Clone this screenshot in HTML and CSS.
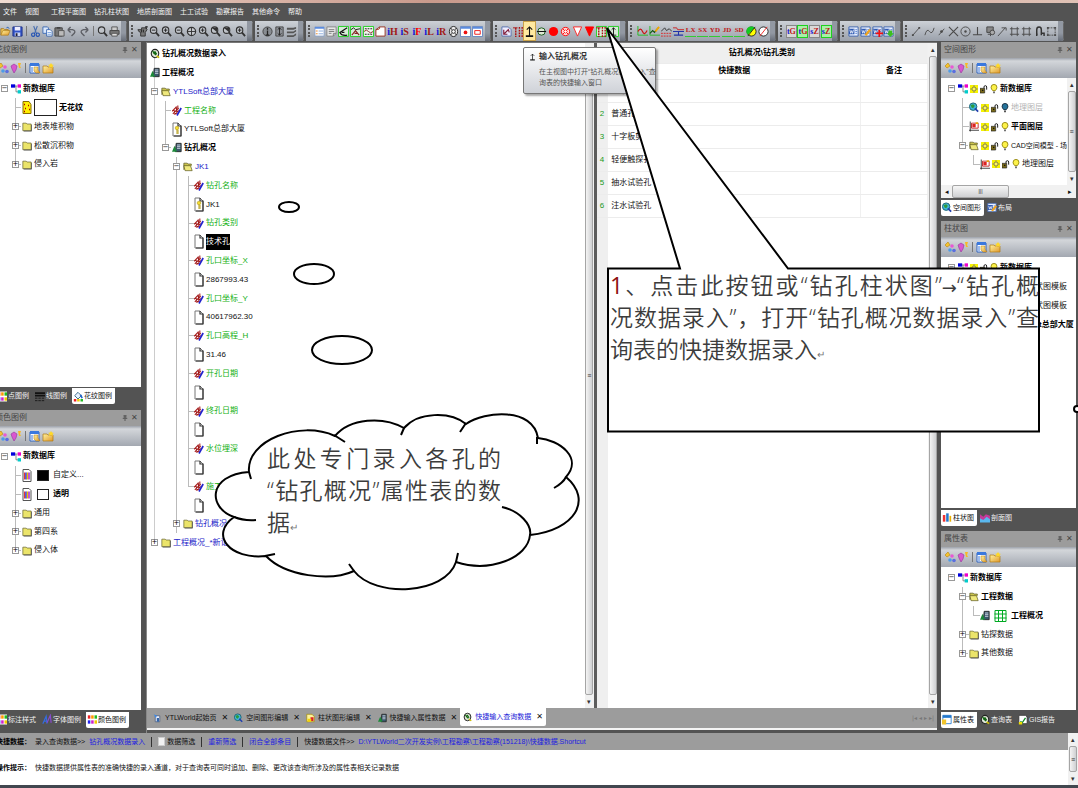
FILE: index.html
```html
<!DOCTYPE html>
<html lang="zh-CN">
<head>
<meta charset="utf-8">
<title>YTLWorld</title>
<link rel="stylesheet" href="styles.css">
</head>
<body>
<svg class="defs" aria-hidden="true">
<defs>
<linearGradient id="gy" x1="0" y1="0" x2="1" y2="1"><stop offset="0" stop-color="#fff3a0"/><stop offset="1" stop-color="#e0982a"/></linearGradient>
</defs>
<symbol id="open" viewBox="0 0 12 12"><path d="M1 10V3h3l1 1h4v2" fill="#f7d56a" stroke="#a87514"/><path d="M1 10l2-5h8l-2 5z" fill="url(#gy)" stroke="#a87514" stroke-width=".7"/><path d="M7 2q2-2 3 1" fill="none" stroke="#2c62b8"/></symbol>
<symbol id="save" viewBox="0 0 12 12"><path d="M1 1h10v10H1z" fill="#3355c8" stroke="#1c2f88"/><path d="M3 1h6v4H3z" fill="#eef"/><path d="M3 7h6v4H3z" fill="#c9d4f4"/><path d="M4 8h2v3H4z" fill="#223"/></symbol>
<symbol id="cut" viewBox="0 0 12 12"><path d="M4 0l3 8M8 0L5 8" stroke="#4a6fb0" stroke-width="1.2"/><circle cx="3.5" cy="9.5" r="1.8" fill="none" stroke="#1f4fb4" stroke-width="1.2"/><circle cx="8.500" cy="9.500" r="1.8" fill="none" stroke="#1f4fb4" stroke-width="1.2"/></symbol>
<symbol id="copy" viewBox="0 0 12 12"><path d="M1 1h5l1 1v6H1z" fill="#dbe8fb" stroke="#3d6bb5"/><path d="M5 4h4l2 2v5H5z" fill="#fff" stroke="#3d6bb5"/><path d="M6 7h4M6 9h4" stroke="#6c9be0"/></symbol>
<symbol id="paste" viewBox="0 0 12 12"><path d="M1 2h8v9H1z" fill="#777" stroke="#444"/><path d="M3 1h4v2H3z" fill="#444"/><path d="M5 5h6v6H5z" fill="#bbb" stroke="#555"/></symbol>
<symbol id="undo" viewBox="0 0 12 12"><path d="M2 4h5q4 1 2 4l-3 3M2 4l3-3M2 4l3 3" fill="none" stroke="#5e6066" stroke-width="1.5"/></symbol>
<symbol id="redo" viewBox="0 0 12 12"><path d="M10 4H5Q1 5 3 8l3 3M10 4L7 1M10 4L7 7" fill="none" stroke="#5e6066" stroke-width="1.5"/></symbol>
<symbol id="mag" viewBox="0 0 12 12"><circle cx="5" cy="4.500" r="3.500" fill="#bfc3c9" stroke="#333" stroke-width="1.200"/><path d="M7.500 7l3.500 4" stroke="#333" stroke-width="2"/></symbol>
<symbol id="magp" viewBox="0 0 12 12"><use href="#mag"/><path d="M3 4.500h4M5 2.500v4" stroke="#222"/></symbol>
<symbol id="magm" viewBox="0 0 12 12"><use href="#mag"/><path d="M3 4.500h4" stroke="#222"/></symbol>
<symbol id="magd" viewBox="0 0 12 12"><use href="#mag"/><path d="M2 2l6 5V2z" fill="#333"/></symbol>
<symbol id="magx" viewBox="0 0 12 12"><circle cx="6" cy="6" r="4.500" fill="#c5c8cd" stroke="#333" stroke-width="1.300"/><path d="M6 2v8M2 6h8" stroke="#333"/></symbol>
<symbol id="print" viewBox="0 0 12 12"><path d="M3 1h6v4H3z" fill="#ccc" stroke="#555"/><path d="M1 5h10v4H1z" fill="#777" stroke="#444"/><path d="M3 8h6v3H3z" fill="#ddd" stroke="#555"/></symbol>
<symbol id="hand" viewBox="0 0 12 12"><path d="M1 4h4V2h5l1 2-2 3v4H4V7L2 6z" fill="#777" stroke="#333"/><path d="M10 0v3M9 1h3M5 4v3M7 4v3" stroke="#222"/></symbol>
<symbol id="info" viewBox="0 0 12 12"><circle cx="6" cy="6" r="5" fill="#888c92" stroke="#444"/><path d="M6 2v2M6 5v5M4 10h4" stroke="#222" stroke-width="1.400"/></symbol>
<symbol id="split" viewBox="0 0 12 12"><path d="M2 1h8v10H2z" fill="#8d9096" stroke="#444"/><path d="M6 2v8M4 4l2-2 2 2M4 8l2 2 2-2" stroke="#222" fill="none"/></symbol>
<symbol id="stack" viewBox="0 0 12 12"><path d="M1 2h7l3-1v2L8 4H1zM1 6h7l3-2v2L8 8H1zM1 10h7l3-2v2l-3 2H1z" fill="#555"/></symbol>
<symbol id="list" viewBox="0 0 12 12"><path d="M1 1h10v10H1z" fill="#fff" stroke="#8ba2c8"/><path d="M1 1h10v2H1z" fill="#5b8ce0"/><path d="M2 5h2v1H2zM2 8h2v1H2z" fill="#e8903a"/><path d="M5 5.500h5M5 8.500h5" stroke="#88a9dc"/></symbol>
<symbol id="note" viewBox="0 0 12 12"><path d="M1 1h10v7l-3 3H1z" fill="#e8e8e8" stroke="#888"/><path d="M3 4h6M3 6h6M3 8h3M8 11V8h3" stroke="#777" fill="none"/></symbol>
<symbol id="angle" viewBox="0 0 12 12"><path d="M.5.500h11v11H.5z" fill="#d8ecd8" stroke="#1fd01f"/><path d="M10 2L2 7q2 4 8 3M4 7h3" fill="none" stroke="#111" stroke-width="1.200"/></symbol>
<symbol id="kink" viewBox="0 0 12 12"><path d="M.5.500h11v11H.5z" fill="#d8ecd8" stroke="#1fd01f"/><path d="M1 4l3-2 2 2 5-1" fill="none" stroke="#111"/><path d="M2 10l4-5 4 5M5 8h3" fill="none" stroke="#822" stroke-width="1.200"/></symbol>
<symbol id="wave" viewBox="0 0 12 12"><path d="M.5.500h11v11H.5z" fill="#eef6ee" stroke="#1fd01f"/><path d="M2 3h8M2 9h8" stroke="#111" stroke-dasharray="2 1"/><path d="M1 6q3-3 5 0t5 0" fill="none" stroke="#822"/></symbol>
<symbol id="page" viewBox="0 0 12 12"><path d="M1 11V4l4-3h6v10z" fill="#fff" stroke="#932"/><path d="M1 4q5 0 4-3" fill="none" stroke="#932"/></symbol>
<symbol id="ring" viewBox="0 0 12 12"><ellipse cx="6" cy="6" rx="4.500" ry="5.500" fill="#eee" stroke="#222"/><circle cx="6" cy="6" r="2" fill="#fff" stroke="#222"/><path d="M3 2l1 2M9 2L8 4M3 10l1-2M9 10L8 8" stroke="#222"/></symbol>
<symbol id="rdot" viewBox="0 0 12 12"><path d="M.5.500h11v11H.5z" fill="#fff" stroke="#6284bf"/><path d="M1 1h10v2H1z" fill="#5b8ce0"/><circle cx="6" cy="7" r="2" fill="#e11"/></symbol>
<symbol id="rbox" viewBox="0 0 12 12"><path d="M.5.500h11v11H.5z" fill="#fff" stroke="#6284bf"/><path d="M1 1h10v2H1z" fill="#5b8ce0"/><path d="M3 5h6v4H3z" fill="none" stroke="#e11"/></symbol>
<symbol id="pdoc" viewBox="0 0 12 12"><path d="M1 1h7l3 3v7H1z" fill="#eef" stroke="#5871b0"/><path d="M3 9l5-5 1 3M3 4v5h4" fill="none" stroke="#83213e" stroke-width="1.300"/></symbol>
<symbol id="bars" viewBox="0 0 12 12"><path d="M3 2v10M7 1v11M10 1v11" stroke="#a11" stroke-width="1.500" stroke-dasharray="2 1"/><path d="M0 2h5" stroke="#a11"/></symbol>
<symbol id="gbars" viewBox="0 0 12 12"><path d="M.5.500h11v11H.5z" fill="#d8ecd8" stroke="#1fd01f"/><use href="#bars"/></symbol>
<symbol id="up" viewBox="0 0 12 12"><path d="M6 11V1M3 4l3-3 3 3" fill="none" stroke="#111" stroke-width="1.200"/><path d="M2 11h8" stroke="#111" stroke-width="2"/></symbol>
<symbol id="gup" viewBox="0 0 12 12"><path d="M.5.500h11v11H.5z" fill="#d8ecd8" stroke="#1fd01f"/><path d="M6 10V2M4 4l2-2 2 2M3 10h6" fill="none" stroke="#111"/></symbol>
<symbol id="cbar" viewBox="0 0 12 12"><circle cx="6" cy="6" r="4" fill="#dfe8d5" stroke="#151"/><path d="M1 6h10" stroke="#111" stroke-width="1.300"/></symbol>
<symbol id="red" viewBox="0 0 12 12"><circle cx="6" cy="6" r="5" fill="#f00"/></symbol>
<symbol id="cross" viewBox="0 0 12 12"><circle cx="6" cy="6" r="4.500" fill="#fdd" stroke="#f00"/><path d="M3 3l6 6M9 3l-6 6" stroke="#f00"/><path d="M6 4l2 2-2 2-2-2z" fill="#fff" stroke="#f00" stroke-width=".7"/></symbol>
<symbol id="tri" viewBox="0 0 12 12"><path d="M1.500 1h9L6 11z" fill="#fff" stroke="#f22"/></symbol>
<symbol id="trif" viewBox="0 0 12 12"><path d="M1.500 1h9L6 11z" fill="#f00" stroke="#f00"/></symbol>
<symbol id="w1" viewBox="0 0 12 12"><path d="M1 0v10h11" stroke="#2b2" fill="none"/><path d="M1 6q3-5 5 0t5-1" fill="none" stroke="#c11" stroke-width="1.300"/></symbol>
<symbol id="w2" viewBox="0 0 12 12"><path d="M1 0v10h11" stroke="#2b2" fill="none"/><path d="M1 8l3-3 2 2 4-5" fill="none" stroke="#151" stroke-width="1.300"/><path d="M7 6l4-5" stroke="#f2a800" stroke-width="2"/></symbol>
<symbol id="w3" viewBox="0 0 12 12"><path d="M0 6l4-4 2 3 3-2 3 3" stroke="#333" fill="none"/><path d="M0 8h12M0 11h12" stroke="#d22" stroke-dasharray="2 1"/></symbol>
<symbol id="w4" viewBox="0 0 12 12"><path d="M0 2h4l1 2h7" stroke="#c22" fill="none"/><path d="M0 6h12M1 10h10M6 6v4" stroke="#23a" fill="none" stroke-width="1.200"/></symbol>
<symbol id="yg" viewBox="0 0 12 12"><circle cx="6" cy="6" r="5" fill="#ff0" stroke="#222"/><path d="M9.500 2A5 5 0 002 9.500z" fill="#1c2"/><path d="M2 11l8-10" stroke="#222"/></symbol>
<symbol id="wh" viewBox="0 0 12 12"><circle cx="6" cy="6" r="5" fill="#fff" stroke="#222"/><path d="M2 11l8-10" stroke="#e22"/></symbol>
<symbol id="doc" viewBox="0 0 12 12"><path d="M1 1h10v10H1z" fill="#e9f0ff" stroke="#3c64ae"/><path d="M1 3h6v6H1z" fill="#2d59b3"/><path d="M2 4l1 4 1-3 1 3 1-4" stroke="#fff" fill="none" stroke-width=".8"/><path d="M8 4h2M8 6h2M8 8h2" stroke="#5b86d0"/></symbol>
<symbol id="doce" viewBox="0 0 12 12"><use href="#doc"/><path d="M6 10l5-6" stroke="#f3a51c" stroke-width="2.500"/></symbol>
<symbol id="docp" viewBox="0 0 12 12"><use href="#doc"/><path d="M8 4v8M4 8h8" stroke="#f01010" stroke-width="2"/></symbol>
<symbol id="docg" viewBox="0 0 12 12"><use href="#doc"/><path d="M8 12L4 8h2V5h4v3h2z" fill="#3cbf1e"/></symbol>
<symbol id="d1" viewBox="0 0 12 12"><path d="M2 10l7-8" stroke="#4a4a4a"/><path d="M1 9h2v2H1zM8 1h2v2H8z" fill="#4a4a4a"/></symbol>
<symbol id="d2" viewBox="0 0 12 12"><path d="M1 10q2-8 5-4t5-4" fill="none" stroke="#4a4a4a"/></symbol>
<symbol id="d3" viewBox="0 0 12 12"><path d="M3 10l6-7" stroke="#4a4a4a"/><circle cx="6" cy="6" r="1.500" fill="#4a4a4a"/></symbol>
<symbol id="d4" viewBox="0 0 12 12"><path d="M1 1l10 10M11 1L1 11" stroke="#4a4a4a" stroke-width="1.200"/></symbol>
<symbol id="d5" viewBox="0 0 12 12"><circle cx="6" cy="6" r="5" fill="none" stroke="#4a4a4a"/><circle cx="6" cy="6" r="1.300" fill="#4a4a4a"/></symbol>
<symbol id="d6" viewBox="0 0 12 12"><path d="M6 1v8M1 9.500h10" stroke="#4a4a4a" stroke-width="1.200"/></symbol>
<symbol id="d7" viewBox="0 0 12 12"><path d="M2 1h7v6H2z" fill="#888" stroke="#444"/><circle cx="8" cy="7" r="2.500" fill="#aaa" stroke="#444"/><path d="M3 9h3v2" stroke="#444" fill="none"/></symbol>
<symbol id="d8" viewBox="0 0 12 12"><path d="M1 11L9 2M5 2h5v3" stroke="#4a4a4a" fill="none"/></symbol>
<symbol id="d9" viewBox="0 0 12 12"><path d="M3 1v10M9 1v10M1 3h10M1 9h10" stroke="#4a4a4a"/></symbol>
<symbol id="d10" viewBox="0 0 12 12"><path d="M3 11V4q0-3 2.500-3T8 4v6M3 9h1M8 8h3v3" stroke="#333" stroke-width="1.600" fill="none"/></symbol>
<symbol id="d11" viewBox="0 0 12 12"><path d="M2 2h8v8H2z" fill="none" stroke="#4a4a4a" stroke-dasharray="2 1"/><path d="M1 1h2v2H1zM9 1h2v2H9zM1 9h2v2H1zM9 9h2v2H9z" fill="#4a4a4a"/></symbol>
<symbol id="pin" viewBox="0 0 8 8"><path d="M2 1h4M3 1v3M5 1v3M1 4.500h6M4 5v3" stroke="#444" fill="none"/></symbol>
<symbol id="t1" viewBox="0 0 12 12"><path d="M1 4l3-3 2 3-3 2z" fill="#f4c430" stroke="#b58212" stroke-width=".6"/><circle cx="8" cy="5" r="1.800" fill="#e75ad4"/><circle cx="6" cy="9" r="1.800" fill="#4c9be8"/><circle cx="10" cy="9.500" r="1.800" fill="#5a6ee0"/></symbol>
<symbol id="t2" viewBox="0 0 12 12"><path d="M1 4l3-2 3 2-1 4-2 3-2-4z" fill="#d957d0" stroke="#93339a" stroke-width=".6"/><path d="M8 1h3l-1 3 1 2H9z" fill="#f7b925"/></symbol>
<symbol id="t3" viewBox="0 0 12 12"><path d="M1 2h9v9H1z" fill="#fff" stroke="#2d62c0"/><path d="M1 1h9v3H1z" fill="#3a78de"/><path d="M5 5h4v3l2 3H7L5 9z" fill="url(#gy)" stroke="#a87514" stroke-width=".5"/><path d="M3 5v5" stroke="#3a78de"/></symbol>
<symbol id="t4" viewBox="0 0 12 12"><path d="M1 4h4l1 1h5v6H1z" fill="url(#gy)" stroke="#b07a12" stroke-width=".7"/><path d="M9 1l1 1.500 2 .5-1.500 1L11 6 9 5 7 6l.500-2L6 3l2-.5z" fill="#ffd928"/></symbol>
<symbol id="db" viewBox="0 0 12 12"><path d="M4 3h4M6 3v7h3" stroke="#777" fill="none"/><path d="M0 1h5v4H0z" fill="#00d"/><path d="M8 1h4v4H8z" fill="#e0c"/><path d="M8 8h4v4H8z" fill="#0cc"/></symbol>
<symbol id="fd" viewBox="0 0 12 12"><path d="M1 2h4l1 1h5v8H1z" fill="#ebe46a" stroke="#5d5a22" stroke-width=".8"/><path d="M11.500 4v7.500H2" stroke="#555" fill="none"/></symbol>
<symbol id="fo" viewBox="0 0 12 12"><path d="M1 10V2h4l1 1h4v2" fill="#c9c24c" stroke="#55521d" stroke-width=".8"/><path d="M2.500 11L1 5h8l2 6z" fill="#efe87c" stroke="#55521d" stroke-width=".8"/></symbol>
<symbol id="fld" viewBox="0 0 12 12"><path d="M0 7l5-5M1 10l7-7M3 11l5-5M2 4l2 7M5 1l1 9M7 0v5" stroke="#a31919" stroke-width="1.300"/><path d="M6 12l5-9" stroke="#22c" stroke-width="2"/></symbol>
<symbol id="pg" viewBox="0 0 10 15"><path d="M1 1h5l3 3v10H1z" fill="#fff" stroke="#777"/><path d="M6 1v3h3v10H2" fill="none" stroke="#333" stroke-width="1.200"/></symbol>
<symbol id="pk" viewBox="0 0 10 15"><use href="#pg"/><path d="M5 7v5M5 9h2M5 11h2" stroke="#b39b14"/><circle cx="5" cy="6" r="1.800" fill="#f4dc30" stroke="#b39b14" stroke-width=".6"/></symbol>
<symbol id="prj" viewBox="0 0 12 12"><path d="M5 1h6v10H4z" fill="#3a5a6c" stroke="#222"/><path d="M6 3h4M6 5h4M6 7h4" stroke="#dde"/><path d="M0 11l3-7 3 7z" fill="#1c8a3a"/></symbol>
<symbol id="qry" viewBox="0 0 12 12"><ellipse cx="6" cy="6" rx="4.500" ry="5" fill="#dfe6d8" stroke="#222" stroke-width="1.300"/><path d="M3 3l4 5M4 6l2-2 2 3" stroke="#161" stroke-width="1.500" fill="none"/><path d="M8 9l3 2" stroke="#cb0" stroke-width="2"/></symbol>
<symbol id="pat" viewBox="0 0 10 14"><path d="M1 1h6l2 3v9H1z" fill="#fe0" stroke="#886d00"/><path d="M2 4h1M6 5h1M3 8h1M7 9h1M2 11h1" stroke="#a00" stroke-width="1.300"/></symbol>
<symbol id="clr" viewBox="0 0 10 14"><path d="M1 1h6l2 2v10H1z" fill="#fff" stroke="#555"/><path d="M2.500 4v7" stroke="#e33"/><path d="M4 4v7" stroke="#22c" stroke-width="1.500"/><path d="M5.500 4v7" stroke="#e8c400" stroke-width="1.500"/><path d="M7 4v7" stroke="#a2c" stroke-width="1.500"/></symbol>
<symbol id="gear" viewBox="0 0 12 12"><path d="M0 0h12v12H0z" fill="#f6f200"/><circle cx="6" cy="6" r="3" fill="#fff65c" stroke="#555"/><path d="M6 0v3M6 9v3M0 6h3M9 6h3" stroke="#777"/></symbol>
<symbol id="lock" viewBox="0 0 12 12"><path d="M0 5h7v7H0z" fill="#7a6a18" stroke="#222"/><path d="M6 5V3q0-2 2-2t2 2v4" fill="none" stroke="#222" stroke-width="1.500"/><path d="M3 7h2v2H3z" fill="#111"/></symbol>
<symbol id="bulb" viewBox="0 0 8 12"><path d="M4 .500Q7.500.500 7.500 4 7.500 6 5.500 8h-3Q.5 6 .5 4 .5.500 4 .500z" fill="#fdf24a" stroke="#8b7d00"/><path d="M3 9h2v2H3z" fill="#555"/></symbol>
<symbol id="bulbx" viewBox="0 0 8 12"><path d="M4 .500Q7.500.500 7.500 4 7.500 6 5.500 8h-3Q.5 6 .5 4 .5.500 4 .500z" fill="#25729a" stroke="#123"/><path d="M3 9h2v2H3z" fill="#333"/></symbol>
<symbol id="globe" viewBox="0 0 12 12"><circle cx="5" cy="5" r="4.500" fill="#3fb5d8" stroke="#156"/><path d="M2 3l3-1 2 2-2 3-2-1z" fill="#2d9a3c"/><path d="M7 7l4 4" stroke="#223fae" stroke-width="2"/></symbol>
<symbol id="lay" viewBox="0 0 12 12"><path d="M1.500 0v12M0 10.500h12" stroke="#222"/><path d="M3 2h8v6H3z" fill="#fff" stroke="#b11"/><path d="M4 3h4v4H4z" fill="#d22"/><path d="M8 1h3v2H8z" fill="#e8a800"/></symbol>
<symbol id="grd" viewBox="0 0 12 12"><path d="M.5.500h11v11H.5zM4 0v12M8 0v12M0 4h12M0 8h12" fill="#fff" stroke="#0a2"/></symbol>
<symbol id="pal" viewBox="0 0 12 12"><path d="M0 0h12v12H0z" fill="#fff"/><path d="M1 1h3v4H1z" fill="#e22"/><path d="M5 1h3v4H5z" fill="#f90"/><path d="M9 1h3v4H9z" fill="#2b2"/><path d="M1 7h3v4H1z" fill="#22e"/><path d="M5 7h3v4H5z" fill="#c2c"/><path d="M9 7h3v4H9z" fill="#ec0"/></symbol>
<symbol id="fill" viewBox="0 0 12 12"><path d="M2 5l4-4 4 4-4 4z" fill="#e8f2ff" stroke="#257"/><path d="M9 4l2 4" stroke="#26c" stroke-width="2"/><path d="M1 9h3v3H1z" fill="#e22"/><path d="M5 9h3v3H5z" fill="#ec0"/><path d="M9 9h3v3H9z" fill="#2b2"/></symbol>
<symbol id="lns" viewBox="0 0 12 12"><path d="M0 2h12M0 5h12" stroke="#111" stroke-width="2"/><path d="M0 8h12M0 11h12" stroke="#111" stroke-dasharray="3 1"/></symbol>
<symbol id="aa" viewBox="0 0 12 12"><path d="M1 11l4-9 1 9M2 8h4" stroke="#336ce0" stroke-width="1.400" fill="none"/><path d="M6 10l4-9 1 9" stroke="#8a4ad0" stroke-width="1.400" fill="none"/></symbol>
<symbol id="cht" viewBox="0 0 12 12"><path d="M0 0h12v12H0z" fill="#fff"/><path d="M1 3h3v8H1z" fill="#e33"/><path d="M5 1h3v10H5z" fill="#27c"/><path d="M9 4h2v7H9z" fill="#e9b000"/></symbol>
<symbol id="prof" viewBox="0 0 12 12"><path d="M0 2l4 3 3-3 5 2v7H0z" fill="#c43a9a"/><path d="M0 7l4 2 4-4 4 3v4H0z" fill="#5ab8ee"/></symbol>
<symbol id="tbl" viewBox="0 0 12 12"><path d="M1 1h10v10H1z" fill="#fff" stroke="#27c"/><path d="M1 1h10v3H1z" fill="#27c"/><path d="M0 6h5v6H0z" fill="#f2c52c"/></symbol>
<symbol id="ydoc" viewBox="0 0 12 12"><path d="M1 1h7l3 3v7H1z" fill="#fdf29a" stroke="#a08a10"/><path d="M6 5h4v5H6z" fill="#d22"/><path d="M2 7h5v4H2z" fill="#f4d40a"/></symbol>
<symbol id="rpt" viewBox="0 0 12 12"><path d="M1 1h8l2 2v8H1z" fill="#fff" stroke="#333"/><path d="M3 8l2 2 4-6" stroke="#182" stroke-width="1.500" fill="none"/><path d="M1 9h4v3H1z" fill="#ed0"/></symbol>
<symbol id="home" viewBox="0 0 12 12"><path d="M3 3h6v8H3z" fill="#e9eefc" stroke="#457"/><path d="M1 1l4 2-1 3z" fill="#38e"/><path d="M5 6h3v5H5z" fill="#36a"/></symbol>
</svg>

<div class="topline"></div>
<nav class="menu">
<button>文件</button><button>视图</button><button>工程平面图</button><button>钻孔柱状图</button><button>地质剖面图</button><button>土工试验</button><button>勘察报告</button><button>其他命令</button><button>帮助</button>
</nav>

<div class="bars">
<div class="grp g1"><button><svg><use href="#open"/></svg></button><button><svg><use href="#save"/></svg></button><i class="sep"></i><button><svg><use href="#cut"/></svg></button><button><svg><use href="#copy"/></svg></button><button><svg><use href="#paste"/></svg></button><button><svg><use href="#undo"/></svg></button><button><svg><use href="#redo"/></svg></button><i class="sep"></i><button><svg><use href="#mag"/></svg></button><button><svg><use href="#print"/></svg></button><i class="end"></i></div>
<div class="grp g2"><i class="grip"></i><button><svg><use href="#hand"/></svg></button><button><svg><use href="#magm"/></svg></button><button><svg><use href="#magp"/></svg></button><button><svg><use href="#magm"/></svg></button><button><svg><use href="#magx"/></svg></button><button><svg><use href="#magp"/></svg></button><button><svg><use href="#magd"/></svg></button><button><svg><use href="#magd"/></svg></button><button><svg><use href="#magp"/></svg></button><i class="end"></i></div>
<div class="grp g3"><i class="grip"></i><button><svg><use href="#info"/></svg></button><button><svg><use href="#split"/></svg></button><button><svg><use href="#stack"/></svg></button><i class="end"></i></div>
<div class="grp g4"><i class="grip"></i><button><svg><use href="#list"/></svg></button><button><svg><use href="#note"/></svg></button><button><svg><use href="#angle"/></svg></button><button><svg><use href="#kink"/></svg></button><button><svg><use href="#wave"/></svg></button><button><svg><use href="#page"/></svg></button><button class="ltr"><b>i</b>H</button><button class="ltr"><b>i</b>S</button><button class="ltr hot"><b>i</b>F</button><button class="ltr"><b>i</b>L</button><button class="ltr"><b>i</b>R</button><button><svg><use href="#ring"/></svg></button><button><svg><use href="#rdot"/></svg></button><button><svg><use href="#rbox"/></svg></button><i class="end"></i></div>
<div class="grp g5"><i class="grip"></i><button><svg><use href="#pdoc"/></svg></button><button><svg><use href="#bars"/></svg></button><button class="on"><svg><use href="#up"/></svg></button><button><svg><use href="#cbar"/></svg></button><button><svg><use href="#red"/></svg></button><button><svg><use href="#cross"/></svg></button><button><svg><use href="#tri"/></svg></button><button><svg><use href="#trif"/></svg></button><button><svg><use href="#gbars"/></svg></button><button><svg><use href="#gup"/></svg></button><i class="end"></i></div>
<div class="grp g6"><i class="grip"></i><button><svg><use href="#w1"/></svg></button><button><svg><use href="#w2"/></svg></button><button><svg><use href="#w3"/></svg></button><button><svg><use href="#w4"/></svg></button><button class="two">LX</button><button class="two">SX</button><button class="two">YD</button><button class="two">JD</button><button class="two">SD</button><button><svg><use href="#yg"/></svg></button><button><svg><use href="#wh"/></svg></button><i class="end"></i></div>
<div class="grp g7"><i class="grip"></i><button class="tag"><b>t</b>G</button><button class="tag lit"><b>t</b>G</button><button class="tag"><b>s</b>Z</button><button class="tag lit"><b>s</b>Z</button><i class="end"></i></div>
<div class="grp g8"><i class="grip"></i><button><svg><use href="#doc"/></svg></button><button><svg><use href="#doce"/></svg></button><button><svg><use href="#docp"/></svg></button><button><svg><use href="#docg"/></svg></button><i class="end"></i></div>
<div class="grp g9"><i class="grip"></i><button><svg><use href="#d1"/></svg></button><button><svg><use href="#d2"/></svg></button><button><svg><use href="#d3"/></svg></button><button><svg><use href="#d4"/></svg></button><button><svg><use href="#d5"/></svg></button><button><svg><use href="#d6"/></svg></button><button><svg><use href="#d7"/></svg></button><button><svg><use href="#d8"/></svg></button><button><svg><use href="#d9"/></svg></button><button><svg><use href="#d9"/></svg></button><button><svg><use href="#d10"/></svg></button><button><svg><use href="#d11"/></svg></button><i class="end"></i></div>
</div>

<main class="main">
<aside class="side left">
<section class="panel p-a">
<header class="cap"><h2>花纹图例</h2><button><svg><use href="#pin"/></svg></button><button>✕</button></header>
<div class="tb"><button><svg><use href="#t1"/></svg></button><button><svg><use href="#t2"/></svg></button><i class="sep"></i><button><svg><use href="#t3"/></svg></button><button><svg><use href="#t4"/></svg></button></div>
<ul class="tree">
<li class="a0"><button class="ex">−</button><svg><use href="#db"/></svg><strong>新数据库</strong></li>
<li class="a1"><i class="noex"></i><svg class="tall"><use href="#pat"/></svg><i class="swatch big"></i><strong>无花纹</strong></li>
<li class="a1"><button class="ex">+</button><svg><use href="#fd"/></svg>地表堆积物</li>
<li class="a1"><button class="ex">+</button><svg><use href="#fd"/></svg>松散沉积物</li>
<li class="a1 last"><button class="ex">+</button><svg><use href="#fd"/></svg>侵入岩</li>
</ul>
</section>
<div class="tabs"><button><svg><use href="#pal"/></svg>点图例</button><button><svg><use href="#lns"/></svg>线图例</button><button class="sel"><svg><use href="#fill"/></svg>花纹图例</button></div>
<section class="panel p-b">
<header class="cap"><h2>颜色图例</h2><button><svg><use href="#pin"/></svg></button><button>✕</button></header>
<div class="tb"><button><svg><use href="#t1"/></svg></button><button><svg><use href="#t2"/></svg></button><i class="sep"></i><button><svg><use href="#t3"/></svg></button><button><svg><use href="#t4"/></svg></button></div>
<ul class="tree">
<li class="a0"><button class="ex">−</button><svg><use href="#db"/></svg><strong>新数据库</strong></li>
<li class="a1"><i class="noex"></i><svg class="tall"><use href="#clr"/></svg><i class="swatch black"></i>自定义...</li>
<li class="a1"><i class="noex"></i><svg class="tall"><use href="#clr"/></svg><i class="swatch"></i><strong>透明</strong></li>
<li class="a1"><button class="ex">+</button><svg><use href="#fd"/></svg>通用</li>
<li class="a1"><button class="ex">+</button><svg><use href="#fd"/></svg>第四系</li>
<li class="a1 last"><button class="ex">+</button><svg><use href="#fd"/></svg>侵入体</li>
</ul>
</section>
<div class="tabs"><button><svg><use href="#pal"/></svg>标注样式</button><button><svg><use href="#aa"/></svg>字体图例</button><button class="sel"><svg><use href="#pal"/></svg>颜色图例</button></div>
</aside>

<section class="center">
<div class="work">
<div class="treebox">
<ul class="tree mid">
<li class="r0"><svg><use href="#qry"/></svg><strong>钻孔概况数据录入</strong></li>
<li class="r0"><svg><use href="#prj"/></svg><strong>工程概况</strong></li>
<li class="m0 blue"><button class="ex">−</button><svg><use href="#fo"/></svg>YTLSoft总部大厦</li>
<li class="m1 green"><i class="noex"></i><svg><use href="#fld"/></svg>工程名称</li>
<li class="m1 nt"><i class="noex"></i><svg class="tall"><use href="#pk"/></svg>YTLSoft总部大厦</li>
<li class="m1 last"><button class="ex">−</button><svg><use href="#prj"/></svg><strong>钻孔概况</strong></li>
<li class="m2 blue"><button class="ex">−</button><svg><use href="#fo"/></svg>JK1</li>
<li class="m3 green"><i class="noex"></i><svg><use href="#fld"/></svg>钻孔名称</li>
<li class="m3 nt"><i class="noex"></i><svg class="tall"><use href="#pk"/></svg>JK1</li>
<li class="m3 green"><i class="noex"></i><svg><use href="#fld"/></svg>钻孔类别</li>
<li class="m3 nt"><i class="noex"></i><svg class="tall"><use href="#pg"/></svg><mark>技术孔</mark></li>
<li class="m3 green"><i class="noex"></i><svg><use href="#fld"/></svg>孔口坐标_X</li>
<li class="m3 nt"><i class="noex"></i><svg class="tall"><use href="#pg"/></svg>2867993.43</li>
<li class="m3 green"><i class="noex"></i><svg><use href="#fld"/></svg>孔口坐标_Y</li>
<li class="m3 nt"><i class="noex"></i><svg class="tall"><use href="#pg"/></svg>40617962.30</li>
<li class="m3 green"><i class="noex"></i><svg><use href="#fld"/></svg>孔口高程_H</li>
<li class="m3 nt"><i class="noex"></i><svg class="tall"><use href="#pg"/></svg>31.46</li>
<li class="m3 green"><i class="noex"></i><svg><use href="#fld"/></svg>开孔日期</li>
<li class="m3 nt"><i class="noex"></i><svg class="tall"><use href="#pg"/></svg></li>
<li class="m3 green"><i class="noex"></i><svg><use href="#fld"/></svg>终孔日期</li>
<li class="m3 nt"><i class="noex"></i><svg class="tall"><use href="#pg"/></svg></li>
<li class="m3 green"><i class="noex"></i><svg><use href="#fld"/></svg>水位埋深</li>
<li class="m3 nt"><i class="noex"></i><svg class="tall"><use href="#pg"/></svg></li>
<li class="m3 green last"><i class="noex"></i><svg><use href="#fld"/></svg>施工</li>
<li class="m3 none"><i class="noex"></i><svg class="tall"><use href="#pg"/></svg></li>
<li class="m2 blue"><button class="ex">+</button><svg><use href="#fd"/></svg>钻孔概况_*</li>
<li class="m0 blue"><button class="ex">+</button><svg><use href="#fd"/></svg>工程概况_*新记录</li>
</ul>
</div>
<div class="vs"><i class="arr">▴</i><i class="thumb">≡</i><i class="arr">▾</i></div>
<div class="bar"></div>
<div class="gridbox">
<table>
<colgroup><col class="c0"><col><col class="c2"></colgroup>
<thead><tr class="ttl"><th colspan="3">钻孔概况\钻孔类别</th></tr><tr><th class="no"></th><th>快捷数据</th><th>备注</th></tr></thead>
<tbody>
<tr><td class="no">1</td><td>技术孔</td><td></td></tr>
<tr><td class="no">2</td><td>普通孔</td><td></td></tr>
<tr><td class="no">3</td><td>十字板剪切孔</td><td></td></tr>
<tr><td class="no">4</td><td>轻便触探孔</td><td></td></tr>
<tr><td class="no">5</td><td>抽水试验孔</td><td></td></tr>
<tr><td class="no">6</td><td>注水试验孔</td><td></td></tr>
</tbody>
</table>
</div>
<div class="vs"><i class="arr">▴</i><i class="thumb"></i><i class="arr">▾</i></div>
</div>
<div class="files">
<button><svg><use href="#home"/></svg>YTLWorld起始页<b>✕</b></button><button><svg><use href="#globe"/></svg>空间图形编辑<b>✕</b></button><button><svg><use href="#ydoc"/></svg>柱状图形编辑<b>✕</b></button><button><svg><use href="#prj"/></svg>快捷输入属性数据<b>✕</b></button><button class="sel"><svg><use href="#qry"/></svg>快捷输入查询数据<b>✕</b></button><span class="nav"><i>|◂</i><i>◂</i><i>▸</i><i>▸|</i></span>
</div>
</section>

<aside class="side right">
<section class="panel p-c">
<header class="cap"><h2>空间图形</h2><button><svg><use href="#pin"/></svg></button><button>✕</button></header>
<div class="tb"><button><svg><use href="#t1"/></svg></button><button><svg><use href="#t2"/></svg></button><i class="sep"></i><button><svg><use href="#t3"/></svg></button><button><svg><use href="#t4"/></svg></button></div>
<div class="scroll">
<ul class="tree">
<li class="b0"><button class="ex">−</button><svg><use href="#db"/></svg><svg class="s"><use href="#gear"/></svg><svg class="s"><use href="#lock"/></svg><svg class="s"><use href="#bulb"/></svg><strong>新数据库</strong></li>
<li class="b1"><i class="noex"></i><svg><use href="#globe"/></svg><svg class="s"><use href="#gear"/></svg><svg class="s"><use href="#lock"/></svg><svg class="s"><use href="#bulbx"/></svg><span class="off">地理图层</span></li>
<li class="b1"><i class="noex"></i><svg><use href="#lay"/></svg><svg class="s"><use href="#gear"/></svg><svg class="s"><use href="#lock"/></svg><svg class="s"><use href="#bulb"/></svg><strong>平面图层</strong></li>
<li class="b1 last"><button class="ex">−</button><svg><use href="#fo"/></svg><svg class="s"><use href="#gear"/></svg><svg class="s"><use href="#lock"/></svg><svg class="s"><use href="#bulb"/></svg><span class="small">CAD空间模型 - 场地</span></li>
<li class="b2 last"><i class="noex"></i><svg><use href="#lay"/></svg><svg class="s"><use href="#gear"/></svg><svg class="s"><use href="#lock"/></svg><svg class="s"><use href="#bulb"/></svg>地理图层</li>
</ul>
<div class="vs"><i class="arr">▴</i><i class="thumb">≡</i><i class="arr">▾</i></div>
</div>
<div class="hs"><i>◂</i><i class="thumb">|||</i><i class="fillr"></i><i>▸</i></div>
</section>
<div class="tabs"><button class="sel"><svg><use href="#globe"/></svg>空间图形</button><button><svg><use href="#doce"/></svg>布局</button></div>
<section class="panel p-d">
<header class="cap"><h2>柱状图</h2><button><svg><use href="#pin"/></svg></button><button>✕</button></header>
<div class="tb"><button><svg><use href="#t1"/></svg></button><button><svg><use href="#t2"/></svg></button><i class="sep"></i><button><svg><use href="#t3"/></svg></button><button><svg><use href="#t4"/></svg></button></div>
<ul class="tree">
<li class="b0"><button class="ex">−</button><svg><use href="#db"/></svg><svg class="s"><use href="#gear"/></svg><svg class="s"><use href="#lock"/></svg><svg class="s"><use href="#bulb"/></svg><strong>新数据库</strong></li>
<li class="b1"><i class="noex"></i><svg><use href="#cht"/></svg><svg class="s"><use href="#gear"/></svg><svg class="s"><use href="#lock"/></svg><svg class="s"><use href="#bulb"/></svg>钻孔柱状图模板</li>
<li class="b1"><i class="noex"></i><svg><use href="#cht"/></svg><svg class="s"><use href="#gear"/></svg><svg class="s"><use href="#lock"/></svg><svg class="s"><use href="#bulb"/></svg>探井柱状图模板</li>
<li class="b1 last"><i class="noex"></i><svg><use href="#cht"/></svg><svg class="s"><use href="#gear"/></svg><svg class="s"><use href="#lock"/></svg><svg class="s"><use href="#bulb"/></svg><strong>YTLSoft总部大厦</strong></li>
</ul>
</section>
<div class="tabs"><button class="sel"><svg><use href="#cht"/></svg>柱状图</button><button><svg><use href="#prof"/></svg>剖面图</button></div>
<section class="panel p-e">
<header class="cap"><h2>属性表</h2><button><svg><use href="#pin"/></svg></button><button>✕</button></header>
<div class="tb"><button><svg><use href="#t1"/></svg></button><button><svg><use href="#t2"/></svg></button><i class="sep"></i><button><svg><use href="#t3"/></svg></button><button><svg><use href="#t4"/></svg></button></div>
<ul class="tree">
<li class="b0"><button class="ex">−</button><svg><use href="#db"/></svg><strong>新数据库</strong></li>
<li class="b1"><button class="ex">−</button><svg><use href="#fo"/></svg><strong>工程数据</strong></li>
<li class="b2"><i class="noex"></i><svg><use href="#prj"/></svg><svg class="grid"><use href="#grd"/></svg><strong>工程概况</strong></li>
<li class="b1"><button class="ex">+</button><svg><use href="#fd"/></svg>钻探数据</li>
<li class="b1 last"><button class="ex">+</button><svg><use href="#fd"/></svg>其他数据</li>
</ul>
</section>
<div class="tabs"><button class="sel"><svg><use href="#tbl"/></svg>属性表</button><button><svg><use href="#qry"/></svg>查询表</button><button><svg><use href="#rpt"/></svg>GIS报告</button></div>
</aside>
</main>

<footer class="foot">
<div class="lines">
<div class="status"><strong>快捷数据：</strong><span>录入查询数据&gt;&gt;</span><a href="#">钻孔概况数据录入</a><i class="sep"></i><label><input type="checkbox">数据筛选</label><i class="sep"></i><a href="#">重新筛选</a><i class="sep"></i><a href="#">闭合全部条目</a><i class="sep"></i><span>快捷数据文件&gt;&gt;</span><a href="#">D:\YTLWorld二次开发实例\工程勘察\工程勘察(151218)\快捷数据.Shortcut</a></div>
<p class="hint"><strong>操作提示：</strong><span>快捷数据提供属性表的准确快捷的录入通道，对于查询表可同时追加、删除、更改该查询所涉及的属性表相关记录数据</span></p>
</div>
<div class="vs"><i class="arr">▴</i><i class="thumb">≡</i><i class="arr">▾</i></div>
</footer>

<div class="tip" role="tooltip"><h3><svg><use href="#up"/></svg>输入钻孔概况</h3><p>在主视图中打开“钻孔概况数据录入”查<br>询表的快捷输入窗口</p></div>

<svg class="over" width="1078" height="640" viewBox="0 0 1078 640" aria-hidden="true">
<g fill="#fff" stroke="#000" stroke-width="2">
<ellipse cx="289" cy="207" rx="10" ry="5"/>
<ellipse cx="314" cy="274" rx="20" ry="10"/>
<ellipse cx="342" cy="350" rx="30" ry="14"/>
<path d="M249 472C246 440 300 420 335 436C350 418 383 416 404 428C418 412 450 411 466 424C485 411 533 407 538 438C560 440 583 458 566 477C593 500 575 530 530 535C528 558 490 573 456 562C445 595 375 598 354 571C330 582 285 576 266 556C230 560 209 535 234 517C208 508 207 475 249 472Z"/>
<path d="M249 472l2 7M334 435l11 7M404 428l-3 7M466 423l-6 9M537 437v7M566 477q-3 6-12 11M530 535c2-10-10-24-28-28M456 562l2-9M354 571l-5-7M265 556l10-2M234 517q10 4 22 3" fill="none"/>
<path d="M608 268.500H680L607 28L788 268.500H1039V431.500H608Z"/>
<circle cx="1077" cy="409" r="3"/>
</g>
</svg>
<p class="note cloud"><span>此处专门录入各孔的</span><span>“钻孔概况”属性表的数</span><span class="end-line">据<small>↵</small></span></p>
<p class="note call"><span><b>1</b>、点击此按钮或“钻孔柱状图”<em>→</em>“钻孔概</span><span>况数据录入”，打开“钻孔概况数据录入”查</span><span class="end-line">询表的快捷数据录入<small>↵</small></span></p>
</body>
</html>
```
FILE: styles.css
```css
* { box-sizing: border-box; }
html, body { height: 100%; }
body {
  margin: 0;
  display: flex;
  flex-direction: column;
  position: relative;
  overflow: hidden;
  background: #535353;
  color: #111;
  font: 8px/12px "Liberation Sans Narrow", "Liberation Sans", "Noto Sans CJK SC", sans-serif;
}
button { border: 0; padding: 0; margin: 0; background: none; font: inherit; color: inherit; display: flex; align-items: center; justify-content: center; }
ul, p, h2, h3 { margin: 0; padding: 0; list-style: none; font-weight: normal; }
i { font-style: normal; }
a { color: #1c1ce0; text-decoration: none; }
strong, th { font-weight: 700; color: #000; }
svg { width: 12px; height: 12px; flex: none; display: block; }
.defs { position: absolute; width: 0; height: 0; }

.topline { height: 3px; flex: none; background: linear-gradient(90deg, #f0dcd2, #c99a8c 40%, #e0c2b6); }
.menu { display: flex; gap: 8px; height: 18px; flex: none; padding-left: 3px; color: #f4f4f4; font-size: 7px; align-items: center; }
.menu button:nth-child(3) { margin-left: 4px; }

.bars { display: flex; gap: 2px; flex: none; height: 20px; padding-right: 14px; }
.grp { display: flex; align-items: center; justify-content: space-between; background: linear-gradient(#cdd1d7, #b3b8c0 50%, #9ba1ab); border-radius: 0 3px 3px 0; min-width: 0; overflow: hidden; }
.grp svg { width: 11px; height: 13px; }
.g1 { flex: 127; } .g2 { flex: 124; } .g3 { flex: 49; } .g4 { flex: 185; } .g5 { flex: 134; } .g6 { flex: 148; } .g7 { flex: 60; } .g8 { flex: 61; } .g9 { flex: 161; }
.grip { width: 3px; height: 12px; margin: 0 2px; border-left: 2px dotted #555; }
.end { width: 6px; align-self: stretch; background: linear-gradient(#9298a2 60%, #676d78); border-right: 1px solid #666; }
.sep { width: 1px; height: 10px; background: #777; margin: 0 2px; }
.on { background: #ffe9a0; outline: 1px solid #c9a24a; height: 18px; }
.ltr, .two, .tag { width: 11px; font: bold 10px/13px "Liberation Serif", serif; color: #a01818; }
.ltr b { color: #1414d8; }
.hot { color: #f00; }
.two { font-size: 7px; line-height: 11px; border-bottom: 1px solid #3c3; color: #c01818; }
.tag { font-size: 8px; line-height: 11px; border: 1px solid #888; background: #d8d8d8; color: #c01818; }
.tag b { color: #1414d8; }
.tag.lit { border-color: #1fd01f; background: #a8f0a8; }

.main { flex: 1; display: flex; min-height: 0; padding-top: 1px; }
.side { display: flex; flex-direction: column; min-height: 0; }
.left { width: 141px; flex: none; }
.right { width: 135px; flex: none; margin: 0 2px 0 4px; }
.panel { display: flex; flex-direction: column; min-height: 0; background: #fff; overflow: hidden; }
.p-a { flex: 344; } .p-b { flex: 300; }
.p-c { flex: 156; } .p-d { flex: 287; } .p-e { flex: 179; }
.cap { display: flex; align-items: center; flex: none; height: 16px; padding: 0 3px; gap: 3px; background: #9c9c9c; color: #444; }
.cap h2 { flex: 1; font-size: 8px; line-height: 12px; white-space: nowrap; }
.left .cap h2 { text-indent: -8px; }
.cap svg { width: 6px; height: 8px; }
.tb { display: flex; align-items: center; flex: none; height: 20px; padding-left: 3px; gap: 1px; background: linear-gradient(#9da2ab, #d3d6da 15%, #a3a8b1); }
.left .tb { padding-left: 0; margin-left: -3px; }
.tabs { display: flex; align-items: center; flex: none; height: 23px; padding-bottom: 4px; gap: 2px; color: #f2f2f2; font-size: 7px; white-space: nowrap; }
.tabs button { height: 16px; padding: 0 3px 0 1px; gap: 1px; }
.left .tabs { margin-left: -4px; }
.tabs svg { width: 10px; height: 11px; }
.tabs .sel, .files .sel { background: #fff; border-radius: 0 0 2px 2px; }
.tabs .sel { color: #111; }

.tree { padding-top: 1px; }
.tree li { display: flex; align-items: center; gap: 2px; height: 19px; white-space: nowrap; background-repeat: no-repeat; }
.tree li:nth-child(5n) { height: 18px; }
.tree svg { width: 10px; height: 11px; }
.tree svg.tall { height: 15px; }
.tree svg.s { width: 8px; height: 10px; }
.tree svg.grid { width: 13px; height: 12px; margin: 0 2px; }
.ex { width: 7px; height: 7px; border: 1px solid #999; background: #fff; font: 7px/5px "DejaVu Sans", sans-serif; color: #000; flex: none; margin-right: 1px; }
.noex { width: 7px; margin-right: 1px; flex: none; }
.swatch { width: 12px; height: 11px; border: 1px solid #222; background: #fff; margin: 0 2px 0 3px; }
.black { background: #000; }
.swatch.big { width: 23px; height: 17px; margin: 0; }
.off { color: #b4b4b4; }
.small { font-size: 7px; }
.blue { color: #2222c8; }
.green { color: #12b012; }
mark { background: #000; color: #fff; line-height: 16px; }

.a0 { padding-left: 1px; }
.a1 { padding-left: 12px; background-image: linear-gradient(#bbb, #bbb), linear-gradient(#bbb, #bbb); background-size: 1px 100%, 6px 1px; background-position: 15px 0, 15px 50%; }
.b0 { padding-left: 7px; }
.b1 { padding-left: 18px; background-image: linear-gradient(#bbb, #bbb), linear-gradient(#bbb, #bbb); background-size: 1px 100%, 7px 1px; background-position: 21px 0, 21px 50%; }
.b2 { padding-left: 29px; background-image: linear-gradient(#bbb, #bbb), linear-gradient(#bbb, #bbb), linear-gradient(#bbb, #bbb); background-size: 1px 50%, 7px 1px, 1px 100%; background-position: 32px 0, 32px 50%, 21px 0; }
.b2.last { background-size: 1px 50%, 7px 1px, 0 0; }
.r0 { padding-left: 3px; }
.mid { background: linear-gradient(#ccc, #ccc) 7px 10px / 1px 490px no-repeat; }
.m0 { padding-left: 4px; }
.m1 { padding-left: 15px; background-image: linear-gradient(#bbb, #bbb), linear-gradient(#bbb, #bbb); background-size: 1px 100%, 6px 1px; background-position: 18px 0, 18px 50%; }
.m1.nt { background-size: 1px 100%, 0 0; }
.a1.last, .b1.last, .m1.last { background-size: 1px 50%, 6px 1px; }
.m2 { padding-left: 26px; background-image: linear-gradient(#bbb, #bbb); background-size: 1px 100%; background-position: 29px 0; }
.m3 { padding-left: 37px; background-image: linear-gradient(#bbb, #bbb), linear-gradient(#bbb, #bbb), linear-gradient(#bbb, #bbb); background-size: 1px 100%, 6px 1px, 1px 100%; background-position: 41px 0, 41px 50%, 29px 0; }
.m3.nt { background-size: 1px 100%, 0 0, 1px 100%; }
.m3.last { background-size: 1px 50%, 6px 1px, 1px 100%; }
.m3.none { background-size: 0 0, 0 0, 1px 100%; }

.center { flex: 1; min-width: 0; display: flex; flex-direction: column; margin-left: 5px; border-left: 1px solid #888; border-top: 1px solid #777; }
.work { flex: 1; min-height: 0; display: flex; background: #fff; }
.treebox { flex: 439; min-width: 0; overflow: hidden; }
.gridbox { flex: 332; min-width: 0; background: linear-gradient(90deg, #efefef 11px, #fff 11px); }
.bar { width: 3px; background: #5c5c5c; }
.vs { width: 9px; flex: none; display: flex; flex-direction: column; align-items: center; background: #f1f1f1; color: #333; font-size: 7px; line-height: 13px; }
.vs .thumb { flex: 1; width: 8px; display: flex; align-items: center; justify-content: center; border: 1px solid #a5a5a5; border-radius: 2px; background: linear-gradient(90deg, #f4f4f4, #cfd0d2); }
.hs { display: flex; align-items: center; flex: none; height: 13px; font-size: 7px; line-height: 11px; background: #f1f1f1; padding: 0 4px; }
.hs .thumb { width: 57px; margin-left: 3px; text-align: center; border: 1px solid #a5a5a5; border-radius: 2px; background: linear-gradient(#f6f6f6, #cfd0d2); font-size: 5px; }
.fillr { flex: 1; }
.scroll { flex: 1; min-height: 0; display: flex; }
.scroll .tree { flex: 1; min-width: 0; overflow: hidden; }

table { width: 100%; border-collapse: collapse; table-layout: fixed; }
.c0 { width: 11px; } .c2 { width: 67px; }
th, td { padding: 0; height: 16px; border-bottom: 1px solid #ececec; border-right: 1px solid #f0f0f0; }
.ttl th { height: 20px; background: #efefef; }
td { height: 23px; padding-left: 3px; white-space: nowrap; }
.no { background: #efefef; color: #1a9a1a; }

.files { display: flex; flex: none; height: 22px; padding-left: 3px; background: #9c9c9c; border-bottom: 2px solid #f4f4f4; margin-bottom: 3px; font-size: 7px; white-space: nowrap; }
.files button { gap: 3px; padding: 0 3px; }
.files svg { width: 9px; height: 12px; }
.files b { margin-left: 2px; font: bold 8px/10px "DejaVu Sans", sans-serif; color: #111; }
.files .sel { color: #2222d8; height: 18px; }
.nav { display: flex; gap: 2px; margin-left: auto; padding-right: 3px; align-self: center; color: #777; font: 6px/10px "DejaVu Sans", sans-serif; }

.foot { display: flex; flex: none; border-bottom: 3px solid #41474f; background: #fff; }
.lines { flex: 1; min-width: 0; }
.foot .vs { width: 10px; }
.status { display: flex; align-items: center; height: 17px; background: #9c9c9c; white-space: nowrap; font-size: 7px; gap: 4px; }
.status strong, .hint strong { margin-left: -4px; }
.status .sep { background: #333; }
.status label { display: flex; align-items: center; gap: 2px; }
.status input { appearance: none; width: 7px; height: 9px; margin: 0; background: #f2f2f2; border: 1px solid #ccc; }
.hint { display: flex; align-items: center; height: 35px; gap: 4px; font-size: 7px; white-space: nowrap; }

.tip { position: absolute; left: 523px; top: 47px; width: 133px; padding: 3px 3px 3px 5px; border: 1px solid #777; border-radius: 2px; background: linear-gradient(#fff, #cfd2d8); box-shadow: 2px 2px 2px #0005; font-size: 7px; }
.tip h3 { display: flex; align-items: center; gap: 3px; font-size: 8px; line-height: 12px; font-weight: 700; color: #333; }
.tip h3 svg { width: 7px; height: 12px; }
.tip p { padding: 3px 0 2px 10px; line-height: 11px; color: #555; white-space: nowrap; }
.over { position: absolute; left: 0; top: 0; width: 1078px; height: 640px; }
.note { position: absolute; color: #3c3c3c; font: 350 23px/32px "Open Sans", "Noto Sans CJK SC", sans-serif; white-space: nowrap; }
.note span { display: block; text-align: justify; text-align-last: justify; white-space: normal; }
.note .end-line { text-align-last: left; }
.note small { font-size: 10px; color: #777; }
.note em { font: 18px/24px "DejaVu Sans", sans-serif; }
.note b { color: #8c1010; font-weight: 400; }
.cloud { left: 267px; top: 442px; width: 234px; }
.call { left: 610px; top: 269px; width: 429px; }
```
